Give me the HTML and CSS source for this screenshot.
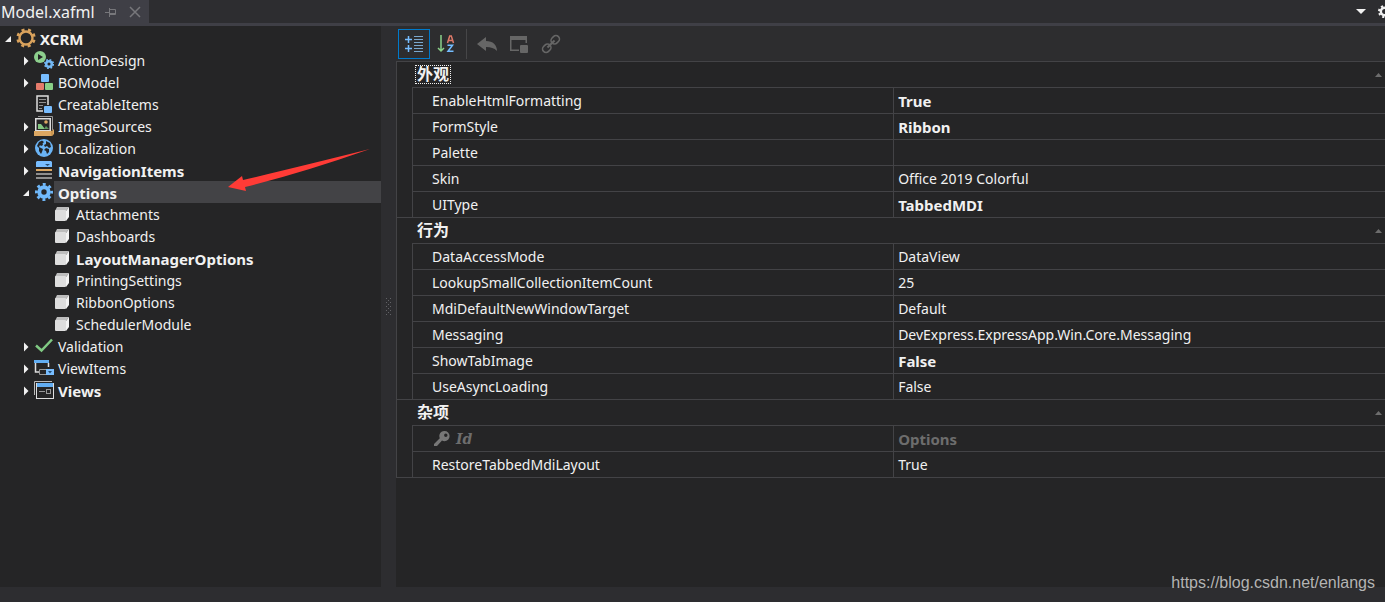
FILE: index.html
```html
<!DOCTYPE html>
<html lang="en">
<head>
<meta charset="utf-8">
<title>Model.xafml</title>
<link rel="stylesheet" href="styles.css">
</head>
<body>
<svg class="defs" aria-hidden="true">
  <symbol id="closed" viewBox="0 0 16 22"><path d="M6 7.500l4.500 4.500L6 16.500z" fill="#f1f1f1"/></symbol>
  <symbol id="open" viewBox="0 0 16 22"><path d="M11 9v6H5z" fill="#f1f1f1"/></symbol>
  <symbol id="cube" viewBox="0 0 20 20"><path d="M3 7l2-4h12l-3 4z" fill="#bdbdbd"/><path d="M14 7l3-4v10l-3 4z" fill="#f4f4f4"/><rect x="3" y="6" width="11" height="11" rx="1" fill="#dedede"/></symbol>
  <symbol id="collapse" viewBox="0 0 8 4"><path d="M0 4l3.500-4L7 4z" fill="#6d6d6d"/></symbol>
</svg>

<header class="tabs">
  <div class="tab">
    <span class="tab-title">Model.xafml</span>
    <button class="tab-button" aria-label="Pin"><svg width="12" height="12" viewBox="0 0 12 12" fill="none" stroke="#77777b"><path d="M0 6.500h4M4.500 2v9M4.500 3.500h6v5h-6M5 7.500h6"/></svg></button>
    <button class="tab-button tab-close" aria-label="Close"><svg width="12" height="12" viewBox="0 0 12 12" fill="none" stroke="#77777b" stroke-width="1.500"><path d="M1 1l10 10M11 1L1 11"/></svg></button>
  </div>
  <div class="tab-tools">
    <button aria-label="Open files"><svg width="10" height="6" viewBox="0 0 10 6"><path d="M0 0h10L5 5z" fill="#f1f1f1"/></svg></button>
    <button aria-label="Tab settings"><svg width="13" height="13" viewBox="0 0 16 16"><circle cx="8" cy="8" r="4.500" fill="none" stroke="#f1f1f1" stroke-width="3"/><circle cx="8" cy="8" r="6.800" fill="none" stroke="#f1f1f1" stroke-width="2.400" stroke-dasharray="2.670 2.670"/></svg></button>
  </div>
</header>

<main class="workspace">
  <nav class="tree" aria-label="Model">
    <ul>
      <li class="node bold"><button aria-label="Collapse XCRM"><svg><use href="#open"/></svg></button>
        <svg class="icon" viewBox="0 0 20 20" fill="none" stroke="#d9a25c"><circle cx="10" cy="10" r="6.500" stroke-width="2.400"/><circle cx="10" cy="10" r="8.300" stroke-width="2.800" stroke-dasharray="3 3.519" stroke-dashoffset="-1.760"/></svg>
        <span class="label">XCRM</span></li>
      <li class="node level-1"><button aria-label="Expand ActionDesign"><svg><use href="#closed"/></svg></button>
        <svg class="icon" viewBox="0 0 20 20"><circle cx="6" cy="7" r="6" fill="#8dcf8d"/><path d="M4 4l5 3-5 3z" fill="#252526"/><circle cx="15" cy="14" r="2.800" fill="none" stroke="#74b9f5" stroke-width="2.500"/><circle cx="15" cy="14" r="4.300" fill="none" stroke="#74b9f5" stroke-width="1.600" stroke-dasharray="1.690 1.690"/></svg>
        <span class="label">ActionDesign</span></li>
      <li class="node level-1"><button aria-label="Expand BOModel"><svg><use href="#closed"/></svg></button>
        <svg class="icon" viewBox="0 0 20 20"><rect x="7" y="2" width="8" height="8" rx="1" fill="#78bdff"/><rect x="2" y="11" width="8" height="7" rx="1" fill="#e57b6b"/><rect x="11" y="11" width="8" height="7" rx="1" fill="#89cf86"/></svg>
        <span class="label">BOModel</span></li>
      <li class="node level-1"><button class="leaf" aria-hidden="true" tabindex="-1"></button>
        <svg class="icon" viewBox="0 0 20 20"><path d="M9 17H3V2h11v9" fill="none" stroke="#dedede" stroke-width="1.500"/><path d="M5 5.500h7M5 8.500h7M5 11.500h4M5 14.500h3" stroke="#929292"/><rect x="10" y="12" width="8" height="7" rx="1" fill="#78bdff"/></svg>
        <span class="label">CreatableItems</span></li>
      <li class="node level-1"><button aria-label="Expand ImageSources"><svg><use href="#closed"/></svg></button>
        <svg class="icon" viewBox="0 0 20 20"><path d="M4 .500h14.500V14" fill="none" stroke="#999"/><rect x="1.750" y="2.750" width="14.500" height="12" fill="none" stroke="#dedede" stroke-width="1.500"/><path d="M4 13V8h3l4 5z" fill="#83c780"/><path d="M10 13l2-3 3 3z" fill="#5f965f"/><circle cx="12" cy="6" r="1.800" fill="#dca762"/><path d="M0 15h18l2-2v5l-2 2H0z" fill="#dca762"/><path d="M18 14v6" stroke="#a67735" stroke-width=".7"/></svg>
        <span class="label">ImageSources</span></li>
      <li class="node level-1"><button aria-label="Expand Localization"><svg><use href="#closed"/></svg></button>
        <svg class="icon" viewBox="0 0 20 20"><circle cx="10" cy="10" r="9" fill="#6bb4f5"/><path d="M5 4l3-1.500L10 4 8.500 5.500 9 7 7 8l-1-1-1 2 2 1 2 1-1 3-1 2-2-3V10L3 8zM12 3l4 2 1 4-2 1-2-2-2 1-1-2 2-1zM12 10l3 1v3l-2 2-1-3-2-1z" fill="#252526"/></svg>
        <span class="label">Localization</span></li>
      <li class="node level-1 bold"><button aria-label="Expand NavigationItems"><svg><use href="#closed"/></svg></button>
        <svg class="icon" viewBox="0 0 20 20"><path d="M3 1h14l1 1v5H2V2z" fill="#78bdff"/><path d="M11 4h5l-2.500 2z" fill="#254c70"/><path d="M2 10h16" stroke="#dca762" stroke-width="2"/><path d="M2 14h16M2 18h16" stroke="#8f8f8f" stroke-width="2"/></svg>
        <span class="label">NavigationItems</span></li>
      <li class="node level-1 bold selected"><button aria-label="Collapse Options"><svg><use href="#open"/></svg></button>
        <svg class="icon" viewBox="0 0 20 20" fill="none" stroke="#70b9fb"><circle cx="10" cy="10" r="4.700" stroke-width="4"/><circle cx="10" cy="10" r="7.600" stroke-width="2.800" stroke-dasharray="2.900 3.069" stroke-dashoffset="1.450"/></svg>
        <span class="label">Options</span></li>
      <li class="node level-2"><button class="leaf" aria-hidden="true" tabindex="-1"></button><svg class="icon"><use href="#cube"/></svg><span class="label">Attachments</span></li>
      <li class="node level-2"><button class="leaf" aria-hidden="true" tabindex="-1"></button><svg class="icon"><use href="#cube"/></svg><span class="label">Dashboards</span></li>
      <li class="node level-2 bold"><button class="leaf" aria-hidden="true" tabindex="-1"></button><svg class="icon"><use href="#cube"/></svg><span class="label">LayoutManagerOptions</span></li>
      <li class="node level-2"><button class="leaf" aria-hidden="true" tabindex="-1"></button><svg class="icon"><use href="#cube"/></svg><span class="label">PrintingSettings</span></li>
      <li class="node level-2"><button class="leaf" aria-hidden="true" tabindex="-1"></button><svg class="icon"><use href="#cube"/></svg><span class="label">RibbonOptions</span></li>
      <li class="node level-2"><button class="leaf" aria-hidden="true" tabindex="-1"></button><svg class="icon"><use href="#cube"/></svg><span class="label">SchedulerModule</span></li>
      <li class="node level-1"><button aria-label="Expand Validation"><svg><use href="#closed"/></svg></button>
        <svg class="icon" viewBox="0 0 20 20"><path d="M2 9.500l5.500 5L18 3.500" fill="none" stroke="#80ca83" stroke-width="2.500"/></svg>
        <span class="label">Validation</span></li>
      <li class="node level-1"><button aria-label="Expand ViewItems"><svg><use href="#closed"/></svg></button>
        <svg class="icon" viewBox="0 0 20 20"><path d="M1.500 5v9H5M14.500 5v4" fill="none" stroke="#dedede" stroke-width="1.500"/><rect y="2" width="15" height="3" fill="#62adf2"/><path d="M12 11.500H5.500v5H12" fill="none" stroke="#999"/><rect x="12" y="11" width="8" height="6" fill="#78bdff"/><path d="M14 13h4l-2 2.500z" fill="#254c70"/></svg>
        <span class="label">ViewItems</span></li>
      <li class="node level-1 bold"><button aria-label="Expand Views"><svg><use href="#closed"/></svg></button>
        <svg class="icon" viewBox="0 0 20 20"><path d="M.500 15V1.500H18" fill="none" stroke="#bbb"/><rect x="2.500" y="3.500" width="17" height="15" fill="none" stroke="#dedede"/><rect x="3" y="3" width="16" height="4" fill="#62adf2"/><path d="M5 11.500h6" stroke="#999"/><rect x="12.500" y="9.500" width="4" height="4" fill="none" stroke="#999"/></svg>
        <span class="label">Views</span></li>
    </ul>
    <svg class="pointer" width="142" height="43" viewBox="0 0 142 43" aria-hidden="true"><path d="M0 38l14-11 1 4Q70 18 142 0 74 24 17 38l1 4z" fill="#ff3b36"/></svg>
  </nav>

  <div class="splitter">
    <svg width="6" height="18" viewBox="0 0 6 18" fill="none" stroke="#626266"><path d="M.500 0v18M4.500 0v18" stroke-dasharray="1 3"/><path d="M2.500 2v16" stroke-dasharray="1 3"/></svg>
  </div>

  <section class="properties">
    <div class="toolbar">
      <button class="tool active" aria-label="Categorized"><svg width="20" height="20" viewBox="0 0 20 20" fill="none"><path d="M1 5.500h7M4.500 2v7M1 14.500h7M4.500 11v7" stroke="#76bdff" stroke-width="1.500"/><path d="M10 2.500h9M10 5.500h9M10 8.500h9M10 11.500h9M10 14.500h9M10 17.500h9" stroke="#7ba8ce"/></svg></button>
      <button class="tool" aria-label="Alphabetical"><svg width="20" height="20" viewBox="0 0 20 20"><path d="M5 1v16M2 14l3 3 3-3" fill="none" stroke="#8bd18a" stroke-width="1.500"/><path d="M11.500 9l2.200-7h1.600l2.200 7M12.500 6.500h4" fill="none" stroke="#df7a69" stroke-width="1.500"/><path d="M11.500 11.200h5l-4.500 6h5.500" fill="none" stroke="#75bdff" stroke-width="1.500"/></svg></button>
      <span class="divider"></span>
      <button class="tool" disabled aria-label="Undo"><svg width="20" height="20" viewBox="0 0 20 20"><path d="M0 10l9-7v4c7 0 11 4 11 10-3-3-6-4-11-4v4z" fill="#666"/></svg></button>
      <button class="tool" disabled aria-label="Window"><svg width="20" height="20" viewBox="0 0 20 20" fill="#666"><path d="M1 2h17v7h-1.500V6h-14v9.500H10V17H1z"/><rect x="11" y="11" width="8" height="8" rx="1"/></svg></button>
      <button class="tool" disabled aria-label="Link"><svg width="20" height="20" viewBox="0 0 20 20" fill="none" stroke="#666" stroke-width="1.600"><g transform="rotate(-45 10 10)"><rect x="-.5" y="6.500" width="9" height="7" rx="3.500"/><rect x="11.500" y="6.500" width="9" height="7" rx="3.500"/><path d="M5 10h10" stroke-width="2"/></g></svg></button>
    </div>

    <table class="grid">
      <colgroup><col class="col-indent"><col class="col-name"><col></colgroup>
      <tbody>
        <tr class="category"><th colspan="3" scope="rowgroup"><div><span class="focused">外观</span><button aria-label="Collapse 外观"><svg width="8" height="4"><use href="#collapse"/></svg></button></div></th></tr>
        <tr><td class="indent"></td><th scope="row">EnableHtmlFormatting</th><td class="changed">True</td></tr>
        <tr><td class="indent"></td><th scope="row">FormStyle</th><td class="changed">Ribbon</td></tr>
        <tr><td class="indent"></td><th scope="row">Palette</th><td></td></tr>
        <tr><td class="indent"></td><th scope="row">Skin</th><td>Office 2019 Colorful</td></tr>
        <tr><td class="indent"></td><th scope="row">UIType</th><td class="changed">TabbedMDI</td></tr>
      </tbody>
      <tbody>
        <tr class="category"><th colspan="3" scope="rowgroup"><div><span>行为</span><button aria-label="Collapse 行为"><svg width="8" height="4"><use href="#collapse"/></svg></button></div></th></tr>
        <tr><td class="indent"></td><th scope="row">DataAccessMode</th><td>DataView</td></tr>
        <tr><td class="indent"></td><th scope="row">LookupSmallCollectionItemCount</th><td>25</td></tr>
        <tr><td class="indent"></td><th scope="row">MdiDefaultNewWindowTarget</th><td>Default</td></tr>
        <tr><td class="indent"></td><th scope="row">Messaging</th><td>DevExpress.ExpressApp.Win.Core.Messaging</td></tr>
        <tr><td class="indent"></td><th scope="row">ShowTabImage</th><td class="changed">False</td></tr>
        <tr><td class="indent"></td><th scope="row">UseAsyncLoading</th><td>False</td></tr>
      </tbody>
      <tbody>
        <tr class="category"><th colspan="3" scope="rowgroup"><div><span>杂项</span><button aria-label="Collapse 杂项"><svg width="8" height="4"><use href="#collapse"/></svg></button></div></th></tr>
        <tr class="readonly"><td class="indent"></td><th scope="row"><div class="key"><svg width="16" height="16" viewBox="0 0 16 16"><path fill-rule="evenodd" d="M10.500 0a5 5 0 0 1 0 10.200c-1 0-1.800-.2-2.500-.6L3 15H0v-2l5.800-5.800A5 5 0 0 1 10.500 0zm1.300 2.500a1.700 1.700 0 1 0 0 3.400 1.700 1.700 0 0 0 0-3.400z" fill="#777"/></svg><i>Id</i></div></th><td class="changed">Options</td></tr>
        <tr><td class="indent"></td><th scope="row">RestoreTabbedMdiLayout</th><td>True</td></tr>
      </tbody>
    </table>
  </section>
</main>
<footer class="status"></footer>
<div class="watermark">https://blog.csdn.net/enlangs</div>
</body>
</html>
```
FILE: styles.css
```css
* { box-sizing: border-box; }

body {
  margin: 0;
  min-height: 100vh;
  display: flex;
  flex-direction: column;
  overflow: hidden;
  background: #2d2d30;
  color: #f1f1f1;
  font: 14px/22px "Noto Sans", "Noto Sans CJK SC", sans-serif;
}

button {
  padding: 0;
  border: 0;
  background: none;
  color: inherit;
  font: inherit;
}

svg { display: block; flex: none; }
.defs { position: absolute; width: 0; height: 0; }

.tabs {
  display: flex;
  justify-content: space-between;
  height: 26px;
  border-bottom: 3px solid #3f3f46;
}

.tab {
  display: flex;
  align-items: center;
  width: 149px;
  padding-left: 1px;
  background: #3f3f46;
}

.tab-title { flex: 1; font-size: 16px; }
.tab-button { margin-right: 12px; }
.tab-close { margin-right: 8px; }

.tab-tools {
  display: flex;
  align-items: center;
  gap: 12px;
  margin-right: -6px;
}

.workspace { flex: 1; display: flex; }

.tree {
  position: relative;
  width: 381px;
  padding-top: 1px;
  background: #252526;
}

.tree ul { margin: 0; padding: 0; list-style: none; }
.node { display: flex; align-items: center; height: 22px; }
.level-1 { padding-left: 18px; }
.level-2 { padding-left: 36px; }
.node button, .node button svg { width: 16px; height: 22px; }
.leaf { visibility: hidden; }
.icon { width: 20px; height: 20px; }
.label { flex: 1; height: 22px; padding-left: 4px; line-height: 24px; }
.bold, .changed { font-size: 15px; font-weight: 700; }
.selected .label { background: #434346; }

.pointer { position: absolute; left: 228px; top: 123px; }

.splitter {
  display: flex;
  align-items: center;
  justify-content: center;
  width: 15px;
}

.properties { flex: 1; background: #252526; }

.toolbar {
  display: flex;
  align-items: center;
  height: 35px;
  padding-left: 2px;
  background: #2d2d2f;
}

.tool {
  display: flex;
  align-items: center;
  justify-content: center;
  width: 32px;
  height: 30px;
}

.active { border: 1px solid #007acc; }
.divider { width: 1px; height: 30px; margin: 0 4px; background: #464648; }

.grid {
  width: 100%;
  table-layout: fixed;
  border-spacing: 0;
  border-left: 1px solid #434346;
  border-bottom: 1px solid #434346;
}

.col-indent { width: 15px; }
.col-name { width: 48.7%; }

.grid th, .grid td {
  height: 26px;
  padding: 0 0 0 4px;
  border-top: 1px solid #434346;
  border-left: 1px solid #434346;
  text-align: left;
}

.grid th { padding-left: 19px; font-weight: 400; }
.grid .indent { padding: 0; border: 0; }
.grid .category th { padding: 0 2px 0 18px; border-left: 0; font-weight: 700; line-height: 18px; }
.category div { display: flex; justify-content: space-between; align-items: center; }
.category span { padding: 0 1px; border: 1px solid transparent; font-size: 16px; line-height: 17px; }
.category .focused { border: 1px dotted #f1f1f1; }
.grid .readonly { color: #6d6d6d; }
.key { display: flex; align-items: center; gap: 6px; padding-left: 2px; }
.key i { font-family: "DejaVu Serif", serif; font-size: 14px; font-weight: 700; }

.status { height: 15px; }

.watermark {
  position: absolute;
  right: 10px;
  bottom: 8px;
  color: #b4b4b4;
  font: 16px/22px "Liberation Sans", Arial, sans-serif;
}
```
